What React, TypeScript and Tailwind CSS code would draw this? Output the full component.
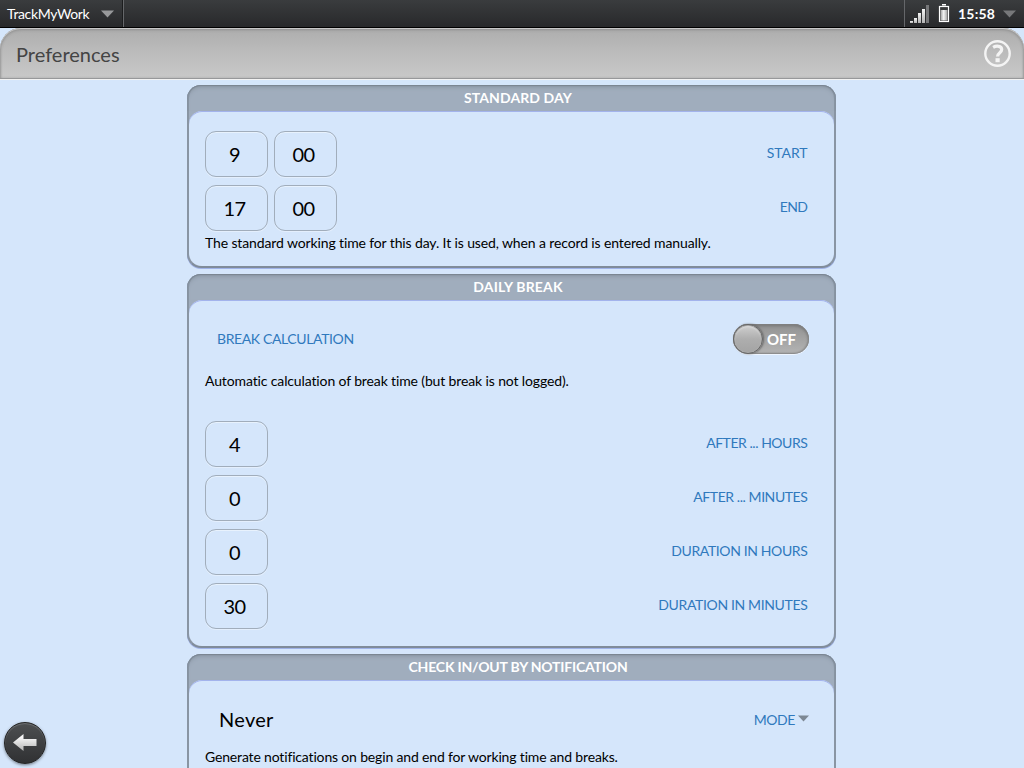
import type { ReactNode } from "react";

function Triangle({ className }: { className: string }) {
  return (
    <svg viewBox="0 0 13 8" preserveAspectRatio="none" className={className} aria-hidden="true">
      <path d="M0 0.5H13L6.5 7.5Z" fill="currentColor" />
    </svg>
  );
}

function StatusBar() {
  return (
    <div className="flex h-7 shrink-0 justify-between border-b border-black bg-linear-to-b from-[#3a3c3e] to-[#28292b] text-sm text-white">
      <div className="flex h-[27px] w-[124px] items-center justify-between border-r border-[#65676a] pr-[9px] pl-[7px] shadow-[inset_-1px_0_0_#1c1d1e]">
        <span className="tracking-[-0.35px]">TrackMyWork</span>
        <Triangle className="mt-px h-2 w-[13px] text-[#98999b]" />
      </div>
      <div className="flex h-[27px] w-[120px] items-center border-l border-[#65676a] pl-[5px]">
        <svg width="20" height="19" viewBox="0 0 20 19" className="mt-px" aria-hidden="true">
          <defs>
            <linearGradient id="sig" x1="0" y1="0" x2="0" y2="1">
              <stop offset="0" stopColor="#f4f4f4" />
              <stop offset="1" stopColor="#b4b4b4" />
            </linearGradient>
          </defs>
          <rect x="0" y="16" width="3" height="2" fill="url(#sig)" />
          <rect x="4" y="13" width="3" height="5" fill="url(#sig)" />
          <rect x="8" y="8" width="3" height="10" fill="url(#sig)" />
          <rect x="12" y="4" width="3" height="14" fill="url(#sig)" />
          <rect x="16" y="0" width="3" height="18" fill="#77787a" />
        </svg>
        <svg className="ml-2 w-3" height="19" viewBox="0 0 12 19" aria-hidden="true">
          <defs>
            <linearGradient id="bat" x1="0" y1="0" x2="1" y2="0">
              <stop offset="0" stopColor="#a0a0a0" />
              <stop offset="0.45" stopColor="#f4f4f4" />
              <stop offset="1" stopColor="#a0a0a0" />
            </linearGradient>
          </defs>
          <rect x="4" y="0" width="4" height="1.5" fill="#fff" />
          <rect x="1.5" y="2.5" width="9" height="15" fill="#3a3b3c" stroke="#fff" strokeWidth="1.2" />
          <rect x="2.5" y="6" width="7" height="10.5" fill="url(#bat)" />
        </svg>
        <span className="ml-2 w-[37px] font-bold tracking-[0.2px]">15:58</span>
        <Triangle className="mt-px ml-2 h-2 w-[13px] text-[#77787a]" />
      </div>
    </div>
  );
}

function Toolbar() {
  return (
    <div className="h-[52px] shrink-0 border-b border-[#f2f2f2]">
      <div className="flex h-[51px] items-center justify-between rounded-t-[21px] border-b border-[#97989a] bg-linear-to-b from-[#adadad] via-[#bcbcbc] to-[#c8c8c8] pr-[13px] pl-4 shadow-[inset_0_1px_0_#c8c8c8,inset_0_2px_3px_#8f8f8f,inset_1px_0_2px_#a8a8a8,inset_-1px_0_2px_#a8a8a8,inset_0_-1px_0_#d4d4d4]">
        <h1 className="pt-px text-xl text-[#444]">Preferences</h1>
        <svg width="27" height="27" viewBox="0 0 27 27" className="mt-px" fill="none" aria-hidden="true">
          <circle cx="13.5" cy="13.5" r="12.2" stroke="#f4f4f4" strokeWidth="2.4" />
          <path d="M9.1 7.4C12.2 5.6 17.7 5.6 17.7 9.6C17.7 12.8 13.6 12.6 13.6 16.6" stroke="#f4f4f4" strokeWidth="3.2" />
          <rect x="11.5" y="18.2" width="4.2" height="4" fill="#f4f4f4" />
        </svg>
      </div>
    </div>
  );
}

function Panel({ title, spacing, height, children }: { title: string; spacing: string; height: string; children: ReactNode }) {
  return (
    <section className={`flex shrink-0 flex-col rounded-[14px] border-x-2 border-b-2 border-x-[#8995a3] border-b-[#808c9a] bg-[#a0adbd] shadow-[0_1px_0_#9fb2e8] ${height}`}>
      <h2 className={`-mx-0.5 flex h-[26px] shrink-0 items-center justify-center rounded-t-[14px] pl-[13px] text-sm font-bold text-white shadow-[inset_0_1px_1px_#798491,inset_0_3px_4px_-1px_#8793a1] ${spacing}`}>
        {title}
      </h2>
      <div className="flex grow flex-col rounded-[13px] bg-[#d5e6fb] px-4 shadow-[inset_0_1px_0_#a3b3ec]">{children}</div>
    </section>
  );
}

function Label({ spacing, children }: { spacing: string; children: ReactNode }) {
  return <span className={`block text-sm text-[#3079bd] ${spacing}`}>{children}</span>;
}

function PickerRow({ values, label, spacing }: { values: string[]; label: string; spacing: string }) {
  return (
    <div className="mb-2 flex h-[46px] shrink-0 gap-1.5 pr-[10.6px]">
      {values.map((value, i) => (
        <button key={i} className="flex w-[63px] items-center justify-center rounded-[11px] border border-[#a1adbb] pr-1 text-xl tracking-[-0.5px] text-black shadow-[inset_0_1px_0_#e8f2fd,0_1px_0_#e4effd]">
          {value}
        </button>
      ))}
      <div className="ml-auto pt-3">
        <Label spacing={spacing}>{label}</Label>
      </div>
    </div>
  );
}

function Switch() {
  return (
    <button className="mt-px flex h-[30px] w-[76px] items-center rounded-full bg-linear-to-b from-[#929292] to-[#b4b4b4] text-[15px] font-bold text-white shadow-[inset_0_0_2px_1px_#818181,inset_0_2px_3px_#777,0_1px_0_#eef5ff]">
      <span className="size-[30px] rounded-full border border-[#666] bg-linear-to-b from-[#c9c9c9] from-10% via-[#aeaeae] via-50% to-[#a3a3a3] shadow-[inset_0_0_0_1px_#ababab,inset_0_2px_2px_#ddd,1px_0_2px_#666]" />
      <span className="ml-1 tracking-[-0.1px]">OFF</span>
    </button>
  );
}

export default function App() {
  return (
    <div className="relative flex h-screen flex-col overflow-hidden bg-[#d5e6fb] font-['Lato','Noto_Sans',sans-serif]">
      <StatusBar />
      <Toolbar />
      <main className="ml-[187px] flex min-h-0 w-[649px] grow flex-col gap-1.5 overflow-hidden pt-[5px]">
        <Panel title="STANDARD DAY" spacing="tracking-[0.1px]" height="h-[183px]">
          <div className="pt-5">
            <PickerRow values={["9", "00"]} label="START" spacing="tracking-[-0.1px]" />
            <PickerRow values={["17", "00"]} label="END" spacing="tracking-[-0.6px]" />
          </div>
          <p className="-mt-1.5 text-sm tracking-[-0.125px] whitespace-nowrap text-black">
            The standard working time for this day. It is used, when a record is entered manually.
          </p>
        </Panel>
        <Panel title="DAILY BREAK" spacing="tracking-[0.15px]" height="h-[374px]">
          <div className="flex justify-between pt-[23px] pr-[9px] pl-3">
            <div className="pt-1.5"><Label spacing="tracking-[-0.38px]">BREAK CALCULATION</Label></div>
            <Switch />
          </div>
          <p className="mt-[17px] mb-[30px] text-sm tracking-[-0.13px] whitespace-nowrap text-black">
            Automatic calculation of break time (but break is not logged).
          </p>
          <PickerRow values={["4"]} label="AFTER ... HOURS" spacing="tracking-[-0.46px]" />
          <PickerRow values={["0"]} label="AFTER ... MINUTES" spacing="tracking-[-0.43px]" />
          <PickerRow values={["0"]} label="DURATION IN HOURS" spacing="tracking-[-0.38px]" />
          <PickerRow values={["30"]} label="DURATION IN MINUTES" spacing="tracking-[-0.36px]" />
        </Panel>
        <Panel title="CHECK IN/OUT BY NOTIFICATION" spacing="tracking-[-0.19px]" height="h-[140px]">
          <div className="flex items-center justify-between pt-[25px] pr-[9px] pl-3.5">
            <span className="text-xl tracking-[0.3px] text-black">Never</span>
            <span className="flex items-center gap-[3px] pt-0.5">
              <Label spacing="tracking-[-0.4px]">MODE</Label>
              <Triangle className="-mt-1 h-[7px] w-[11px] text-[#7d8894]" />
            </span>
          </div>
          <p className="mt-3.5 text-sm tracking-[-0.165px] whitespace-nowrap text-black">
            Generate notifications on begin and end for working time and breaks.
          </p>
        </Panel>
      </main>
      <button aria-label="Back" className="absolute bottom-1 left-1 flex size-[42px] items-center justify-center rounded-full border border-[#222] bg-linear-to-b from-[#4d4f51] to-[#303133] shadow-[0_1px_3px_#707a86,inset_0_1px_1px_#707275]">
        <svg width="24" height="20" viewBox="0 0 24 20" aria-hidden="true">
          <defs>
            <linearGradient id="arrow" x1="0" y1="0" x2="0" y2="1">
              <stop offset="0.2" stopColor="#f6f6f6" />
              <stop offset="1" stopColor="#b4b4b4" />
            </linearGradient>
          </defs>
          <path d="M0 9.5L10.5 1V6H23.5V13H10.5V18Z" fill="url(#arrow)" />
        </svg>
      </button>
    </div>
  );
}
